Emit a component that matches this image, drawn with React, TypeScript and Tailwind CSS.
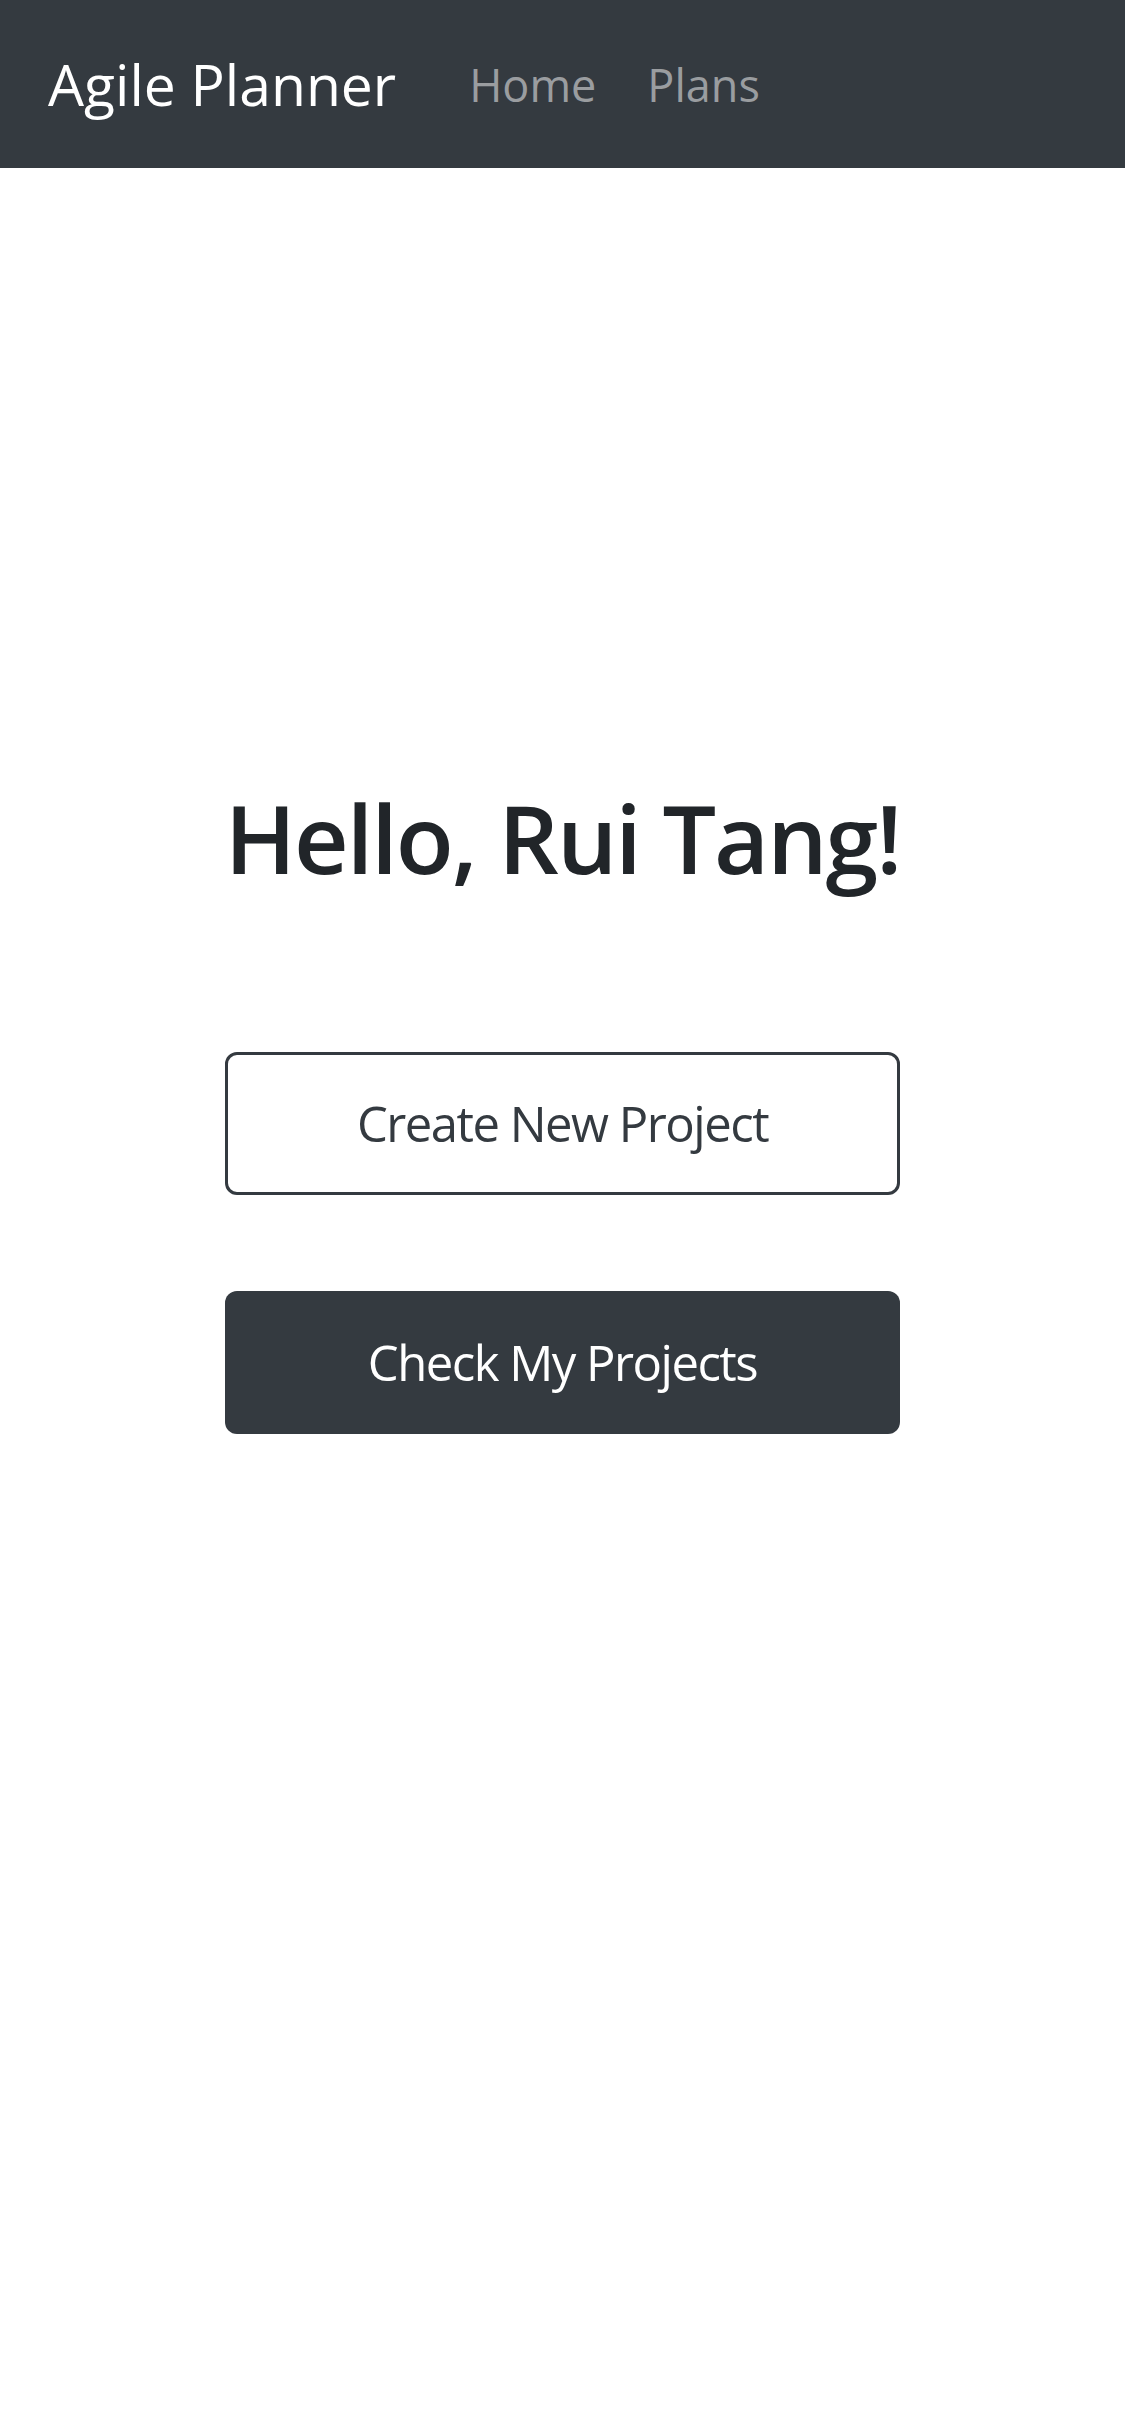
export default function App() {
  const font = { fontFamily: '"Open Sans", "Noto Sans", sans-serif' };

  return (
    <div className="min-h-[2436px] bg-white" style={font}>
      <nav className="h-[168px] bg-[#343a40] flex items-center px-[48px]">
        <span className="text-white text-[57px] leading-none">
          Agile Planner
        </span>
        <div className="flex items-center gap-[51px] ml-[73px]">
          <a className="text-[#9a9da0] text-[45px] leading-none">Home</a>
          <a className="text-[#9a9da0] text-[45px] leading-none">Plans</a>
        </div>
      </nav>

      <main className="flex flex-col items-center pt-[612px]">
        <h1 className="text-[#212529] text-[95px] leading-[1.2] font-semibold tracking-[-2px]">
          Hello, Rui Tang!
        </h1>
        <div className="w-[675px] flex flex-col gap-[96px] mt-[158px]">
          <button className="h-[143px] w-full rounded-[12px] border-[3px] border-[#343a40] bg-white text-[#343a40] text-[49px] tracking-[-1.5px]">
            Create New Project
          </button>
          <button className="h-[143px] w-full rounded-[12px] bg-[#343a40] text-white text-[49px] tracking-[-1.5px]">
            Check My Projects
          </button>
        </div>
      </main>
    </div>
  );
}
